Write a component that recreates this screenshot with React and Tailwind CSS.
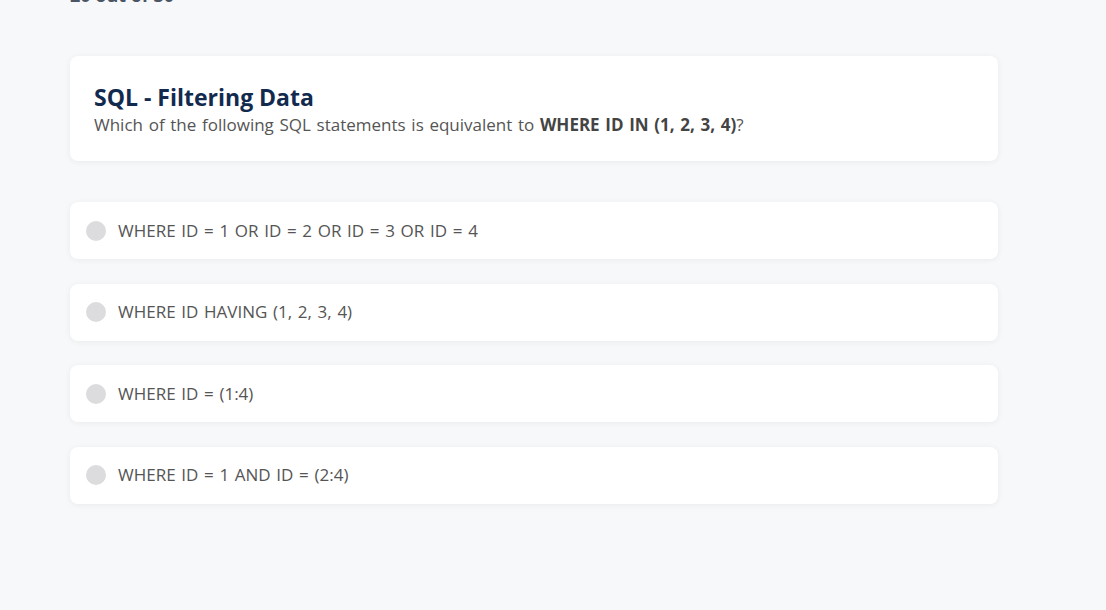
import React, { useState } from 'react'

const options = [
  'WHERE ID = 1 OR ID = 2 OR ID = 3 OR ID = 4',
  'WHERE ID HAVING (1, 2, 3, 4)',
  'WHERE ID = (1:4)',
  'WHERE ID = 1 AND ID = (2:4)',
]

export default function App(){
  const [sel, setSel] = useState(null)

  return (
    <div className="min-h-[610px] bg-[#f7f8fa] overflow-hidden" style={{ fontFamily: '"Open Sans", sans-serif' }}>
      <div className="pl-[70px] w-[998px]">
        <div className="-mt-[14px] h-[18px] text-[18px] leading-[18px] font-bold text-[#4b5563]">20 out of 30</div>
        <div className="mt-[52px] bg-white rounded-lg shadow-[0_1px_6px_rgba(0,0,0,0.06)] px-6 pt-[26px] pb-[23px]">
          <h2 className="text-[23px] leading-[30px] font-bold text-[#132a4f]">SQL - Filtering Data</h2>
          <p className="text-[17px] leading-[26px] text-[#555] [word-spacing:1.25px]">
            Which of the following SQL statements is equivalent to <b className="font-bold text-[#444]">WHERE ID IN (1, 2, 3, 4)</b>?
          </p>
        </div>
        <div className="mt-[41px] flex flex-col gap-[24.5px]">
          {options.map((o, i) => (
            <button
              key={i}
              onClick={() => setSel(i)}
              className="h-[57px] bg-white rounded-lg shadow-[0_1px_6px_rgba(0,0,0,0.06)] flex items-center gap-3 px-4 text-left"
            >
              <span className={`w-5 h-5 rounded-full ${sel === i ? 'bg-[#132a4f]' : 'bg-[#dcdcde]'}`} />
              <span className="text-[17px] text-[#555] [word-spacing:1.25px]">{o}</span>
            </button>
          ))}
        </div>
      </div>
    </div>
  )
}
